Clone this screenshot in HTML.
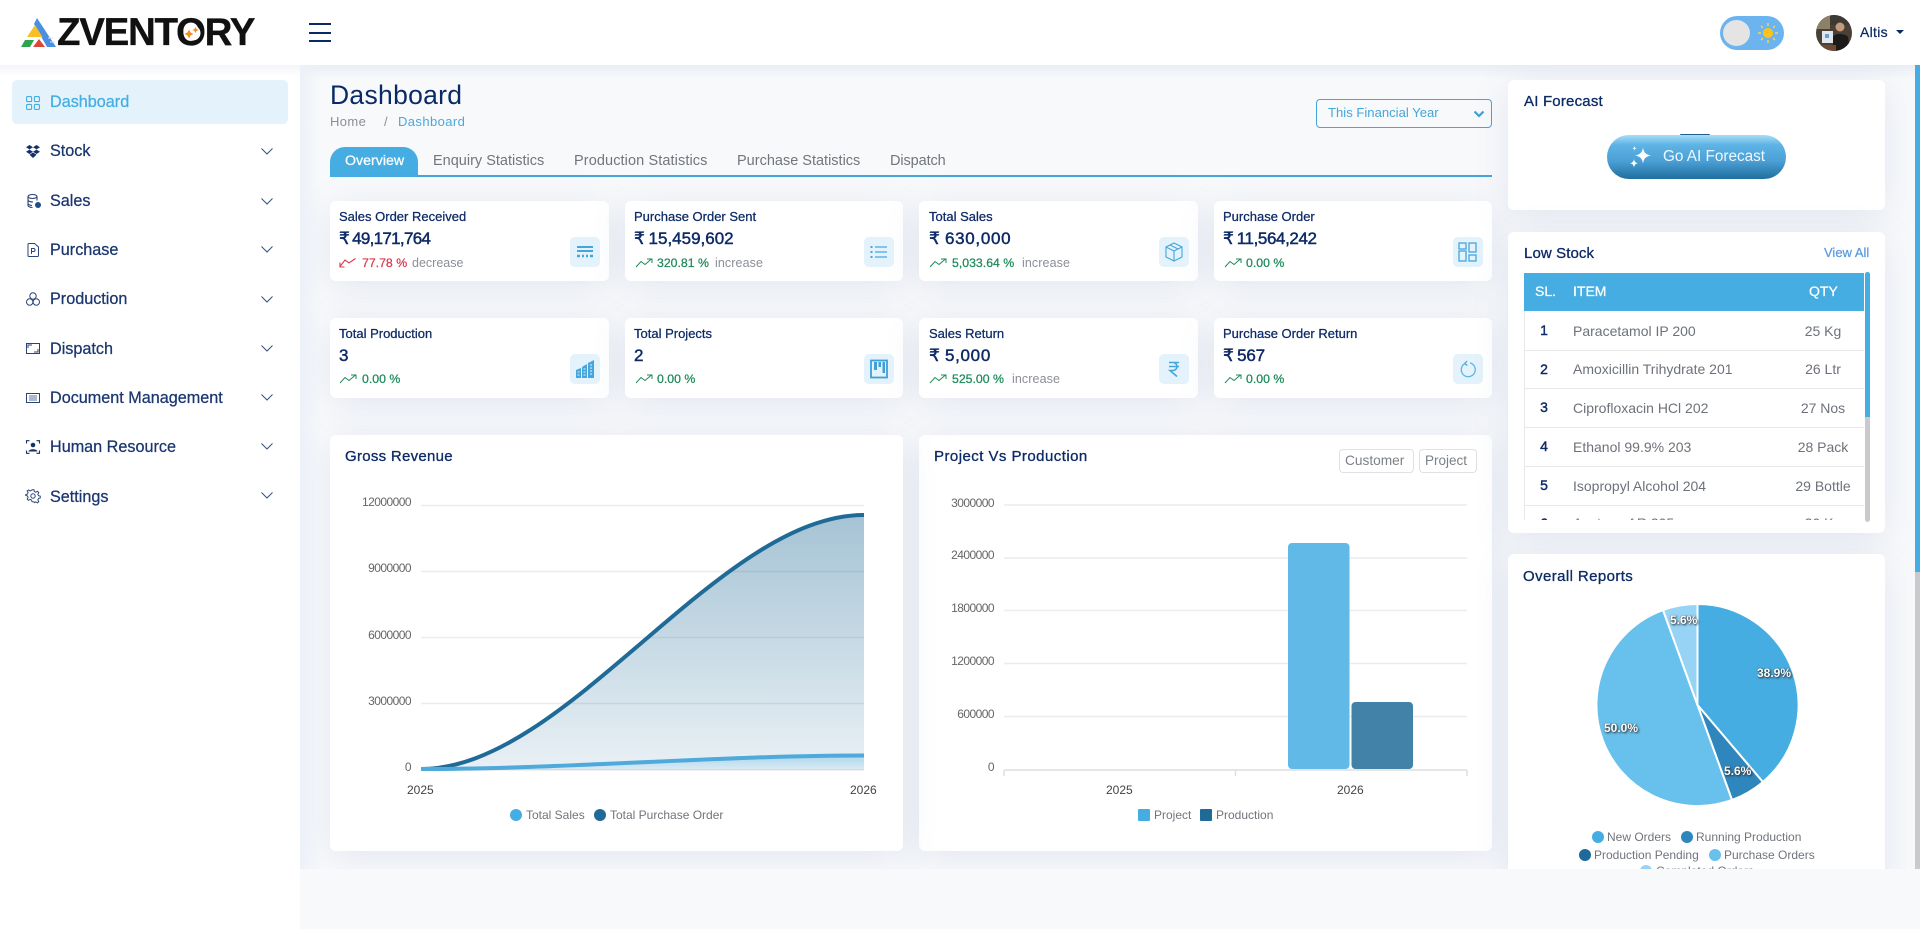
<!DOCTYPE html>
<html lang="en">
<head>
<meta charset="utf-8">
<title>Azventory Dashboard</title>
<style>
*{box-sizing:border-box}
html,body{margin:0;padding:0;width:1920px;height:929px;overflow:hidden;background:#f8f9fb;font-family:"Liberation Sans",Arial,sans-serif}
.t{position:absolute;white-space:nowrap;line-height:20px;height:20px}
.m{-webkit-text-stroke:.25px currentColor}
.b{position:absolute}
svg{position:absolute;display:block;overflow:visible}
header{position:absolute;left:0;top:0;width:1920px;height:65px;background:#fff;z-index:5}
aside{position:absolute;left:0;top:65px;width:300px;height:864px;background:#fff;z-index:4}
main{position:absolute;left:0;top:0;width:1920px;height:869px;overflow:hidden;background:#f8f9fb;z-index:1}
.topshade{position:absolute;left:300px;top:65px;width:1620px;height:14px;background:linear-gradient(#e9edf4,rgba(233,237,244,0))}
.leftshade{position:absolute;left:300px;top:65px;width:22px;height:804px;background:linear-gradient(90deg,#edf1f8,rgba(237,241,248,0))}
.card{position:absolute;background:#fff;border-radius:6px;box-shadow:0 6px 36px rgba(80,105,160,.13)}
.sc{width:279px;height:80px}
.ttl{font-size:13px;color:#0c2a66}
.val{font-size:17px;color:#0c2a66;font-weight:400;-webkit-text-stroke:.45px currentColor;word-spacing:-1px}
.pct{font-size:12.3px}
.g{color:#1e8a5a}.r{color:#d93a4a}
.gray{color:#8b8f96;font-size:12.5px}
.ib{position:absolute;width:30px;height:30px;border-radius:5px;background:#e3f2fb}
.h5{font-size:15px;color:#0c2a66;-webkit-text-stroke:.3px #0c2a66}
.nav{font-size:16.2px;color:#1a3670}
.tab{font-size:14.5px;color:#71767e;top:151px}
.row{position:absolute;left:1524px;width:340px;height:1px;background:#e6e8ec}
.sl{font-size:14px;color:#0c2a66;-webkit-text-stroke:.4px #0c2a66;width:40px;text-align:center;left:1524px}
.it{font-size:14px;color:#6d727a;left:1573px}
.q{font-size:14px;color:#6d727a;width:80px;text-align:center;left:1783px}
.ax{font-size:12px;color:#666;letter-spacing:-.55px}
.xl{font-size:12px;color:#444}
.lg{font-size:12px;color:#70757c}
.pl{font-size:12px;font-weight:700;color:#fff;text-shadow:1px 1px 2px #222,0 0 1px #333}
</style>
</head>
<body>

<main>
  <div class="topshade"></div>
  <div class="leftshade"></div>

  <div class="t" style="left:330px;top:83px;font-size:26.5px;line-height:24px;height:24px;color:#0a2a66;letter-spacing:.3px">Dashboard</div>
  <div class="t" style="left:330px;top:112px;font-size:13px;color:#8a8f96;letter-spacing:.4px">Home</div>
  <div class="t" style="left:384px;top:112px;font-size:13px;color:#8a8f96">/</div>
  <div class="t" style="left:398px;top:112px;font-size:13px;color:#4aa8dc;letter-spacing:.4px">Dashboard</div>

  <div class="b" style="left:1316px;top:99px;width:176px;height:29px;border:1px solid #45a6d8;border-radius:4px"></div>
  <div class="t" style="left:1328px;top:103px;font-size:13.1px;color:#45a6d8">This Financial Year</div>
  <svg style="left:1473px;top:110px" width="12" height="8" viewBox="0 0 12 8"><path d="M1.500 1.500 6 6l4.500-4.500" fill="none" stroke="#3f9fd6" stroke-width="2.2"/></svg>

  <div class="b" style="left:330px;top:175px;width:1162px;height:2px;background:#45a6d8"></div>
  <div class="b" style="left:330px;top:147px;width:88px;height:30px;background:#45ade2;border-radius:15px 15px 0 0"></div>
  <div class="t m" style="left:345px;top:151px;font-size:14.2px;color:#fff">Overview</div>
  <div class="t tab" style="left:433px">Enquiry Statistics</div>
  <div class="t tab" style="left:574px;letter-spacing:.1px">Production Statistics</div>
  <div class="t tab" style="left:737px">Purchase Statistics</div>
  <div class="t tab" style="left:890px;letter-spacing:-.1px">Dispatch</div>

  <div class="card sc" style="left:330px;top:201px"></div>
  <div class="card sc" style="left:625px;top:201px;width:278px"></div>
  <div class="card sc" style="left:919px;top:201px"></div>
  <div class="card sc" style="left:1214px;top:201px;width:278px"></div>
  <div class="card sc" style="left:330px;top:318px"></div>
  <div class="card sc" style="left:625px;top:318px;width:278px"></div>
  <div class="card sc" style="left:919px;top:318px"></div>
  <div class="card sc" style="left:1214px;top:318px;width:278px"></div>

  <div class="t ttl m" style="left:339px;top:207px">Sales Order Received</div>
  <div class="t val" style="left:339px;top:229px;letter-spacing:-.7px">₹ 49,171,764</div>
  <svg style="left:339px;top:257px" width="18" height="11" viewBox="0 0 18 11"><path d="M1 9.500 6 3l4 3 6.500-4.500M1 5.500v4.500h4.500" fill="none" stroke="#d93a4a" stroke-width="1.1"/></svg>
  <div class="t pct r m" style="left:362px;top:253px">77.78 %</div>
  <div class="t gray" style="left:412px;top:253px">decrease</div>
  <div class="ib" style="left:570px;top:237px"></div>
  <svg style="left:576px;top:245px" width="18" height="14" viewBox="0 0 18 14"><path d="M1 2h16M1 6h16" stroke="#45a6dc" stroke-width="2"/><path d="M1 11h3M6 11h2M10 11h2M14 11h3" stroke="#45a6dc" stroke-width="2.4"/></svg>

  <div class="t ttl m" style="left:634px;top:207px">Purchase Order Sent</div>
  <div class="t val" style="left:634px;top:229px">₹ 15,459,602</div>
  <svg style="left:635px;top:258px" width="18" height="10" viewBox="0 0 18 10"><path d="M1 9 6 3.500l4 3L16.500 1M12 1h5v4" fill="none" stroke="#1e8a5a" stroke-width="1"/></svg>
  <div class="t pct g m" style="left:657px;top:253px">320.81 %</div>
  <div class="t gray" style="left:715px;top:253px;letter-spacing:.1px">increase</div>
  <div class="ib" style="left:864px;top:237px"></div>
  <svg style="left:870px;top:245px" width="18" height="14" viewBox="0 0 18 14"><path d="M5 2h12M5 7h12M5 12h12" stroke="#5fb5e6" stroke-width="1.5"/><path d="M.5 2h2M.5 7h2M.5 12h2" stroke="#45a6dc" stroke-width="2"/></svg>

  <div class="t ttl m" style="left:929px;top:207px">Total Sales</div>
  <div class="t val" style="left:929px;top:229px;letter-spacing:.7px">₹ 630,000</div>
  <svg style="left:929px;top:258px" width="18" height="10" viewBox="0 0 18 10"><path d="M1 9 6 3.500l4 3L16.500 1M12 1h5v4" fill="none" stroke="#1e8a5a" stroke-width="1"/></svg>
  <div class="t pct g m" style="left:952px;top:253px">5,033.64 %</div>
  <div class="t gray" style="left:1022px;top:253px;letter-spacing:.1px">increase</div>
  <div class="ib" style="left:1159px;top:237px"></div>
  <svg style="left:1164px;top:242px" width="20" height="20" viewBox="0 0 20 20"><path d="M10 1 18 5v10l-8 4-8-4V5zM2 5l8 4 8-4M10 9v10M6 3l8 4" fill="none" stroke="#45a6dc" stroke-width="1.1"/></svg>

  <div class="t ttl m" style="left:1223px;top:207px">Purchase Order</div>
  <div class="t val" style="left:1223px;top:229px;letter-spacing:-.4px">₹ 11,564,242</div>
  <svg style="left:1224px;top:258px" width="18" height="10" viewBox="0 0 18 10"><path d="M1 9 6 3.500l4 3L16.500 1M12 1h5v4" fill="none" stroke="#1e8a5a" stroke-width="1"/></svg>
  <div class="t pct g m" style="left:1246px;top:253px">0.00 %</div>
  <div class="ib" style="left:1453px;top:237px"></div>
  <svg style="left:1458px;top:242px" width="20" height="20" viewBox="0 0 20 20"><g fill="none" stroke="#45a6dc" stroke-width="1.3"><rect x="1" y="1" width="7" height="6"/><rect x="11" y="1" width="7" height="9"/><rect x="1" y="9" width="7" height="10"/><rect x="11" y="13" width="7" height="6"/></g></svg>

  <div class="t ttl m" style="left:339px;top:324px">Total Production</div>
  <div class="t val" style="left:339px;top:346px">3</div>
  <svg style="left:339px;top:374px" width="18" height="10" viewBox="0 0 18 10"><path d="M1 9 6 3.500l4 3L16.500 1M12 1h5v4" fill="none" stroke="#1e8a5a" stroke-width="1"/></svg>
  <div class="t pct g m" style="left:362px;top:369px">0.00 %</div>
  <div class="ib" style="left:570px;top:354px"></div>
  <svg style="left:575px;top:359px" width="20" height="20" viewBox="0 0 20 20"><path d="M1 19v-8l5-2v10zM7 19V8l5-3v14zM13 19V4l6-3v18z" fill="#45a6dc"/><path d="M2.500 13h2M2.500 16h2M8.500 10h2M8.500 13h2M8.500 16h2M15 6h2M15 9h2M15 12h2M15 15h2" stroke="#e3f2fb" stroke-width="1"/></svg>

  <div class="t ttl m" style="left:634px;top:324px">Total Projects</div>
  <div class="t val" style="left:634px;top:346px">2</div>
  <svg style="left:635px;top:374px" width="18" height="10" viewBox="0 0 18 10"><path d="M1 9 6 3.500l4 3L16.500 1M12 1h5v4" fill="none" stroke="#1e8a5a" stroke-width="1"/></svg>
  <div class="t pct g m" style="left:657px;top:369px">0.00 %</div>
  <div class="ib" style="left:864px;top:354px"></div>
  <svg style="left:870px;top:359px" width="18" height="20" viewBox="0 0 18 20"><rect x="1" y="1.500" width="16" height="17" fill="none" stroke="#3f9fd6" stroke-width="1.8"/><rect x="4" y="3" width="3" height="8" fill="#3f9fd6"/><rect x="8.500" y="3" width="2.500" height="5" fill="#3f9fd6"/><rect x="12.500" y="3" width="2.500" height="11" fill="#3f9fd6"/></svg>

  <div class="t ttl m" style="left:929px;top:324px">Sales Return</div>
  <div class="t val" style="left:929px;top:346px;letter-spacing:.7px">₹ 5,000</div>
  <svg style="left:929px;top:374px" width="18" height="10" viewBox="0 0 18 10"><path d="M1 9 6 3.500l4 3L16.500 1M12 1h5v4" fill="none" stroke="#1e8a5a" stroke-width="1"/></svg>
  <div class="t pct g m" style="left:952px;top:369px">525.00 %</div>
  <div class="t gray" style="left:1012px;top:369px;letter-spacing:.1px">increase</div>
  <div class="ib" style="left:1159px;top:354px"></div>
  <svg style="left:1167px;top:361px" width="14" height="16" viewBox="0 0 14 16"><path d="M2 1.500h10M2 5.500h10M3 1.500h3a4 4 0 0 1 0 8H3l7 6" fill="none" stroke="#45a6dc" stroke-width="1.6"/></svg>

  <div class="t ttl m" style="left:1223px;top:324px">Purchase Order Return</div>
  <div class="t val" style="left:1223px;top:346px;letter-spacing:-.2px">₹ 567</div>
  <svg style="left:1224px;top:374px" width="18" height="10" viewBox="0 0 18 10"><path d="M1 9 6 3.500l4 3L16.500 1M12 1h5v4" fill="none" stroke="#1e8a5a" stroke-width="1"/></svg>
  <div class="t pct g m" style="left:1246px;top:369px">0.00 %</div>
  <div class="ib" style="left:1453px;top:354px"></div>
  <svg style="left:1460px;top:360px" width="16" height="17" viewBox="0 0 16 17"><path d="M5 3.500a7 7 0 1 0 5-.6" fill="none" stroke="#5fb5e6" stroke-width="1.3"/><path d="M7 1 4.800 3.500 7.300 5.500" fill="none" stroke="#45a6dc" stroke-width="1.2"/></svg>

  <div class="card" style="left:330px;top:435px;width:573px;height:416px"></div>
  <div class="t h5" style="left:345px;top:447px;letter-spacing:.28px">Gross Revenue</div>
  <svg style="left:0;top:0" width="1920" height="929" viewBox="0 0 1920 929">
    <defs>
      <linearGradient id="d" x1="0" y1="515" x2="0" y2="770" gradientUnits="userSpaceOnUse"><stop offset="0" stop-color="#1f6a96" stop-opacity=".4"/><stop offset="1" stop-color="#1f6a96" stop-opacity=".1"/></linearGradient>
      <linearGradient id="l" x1="0" y1="755" x2="0" y2="770" gradientUnits="userSpaceOnUse"><stop offset="0" stop-color="#45ade2" stop-opacity=".35"/><stop offset="1" stop-color="#45ade2" stop-opacity=".08"/></linearGradient>
    </defs>
    <path d="M421 505.500H864M421 571.500H864M421 637.500H864M421 703.500H864M421 770H864" stroke="#ececee" stroke-width="1.4" fill="none"/>
    <path d="M421 770C567 770 718 515 864 515V770Z" fill="url(#d)"/>
    <path d="M421 770C567 770 718 755.500 864 755.500V770Z" fill="url(#l)"/>
    <path d="M421 769C567 769 718 515 864 515" fill="none" stroke="#1f6a96" stroke-width="4"/>
    <path d="M421 769C567 769 718 755.500 864 755.500" fill="none" stroke="#4fa9da" stroke-width="4"/>

    <circle cx="516" cy="815" r="6" fill="#45ade2"/>
    <circle cx="600" cy="815" r="6" fill="#1f6a96"/>

    <path d="M1004 505H1467M1004 558H1467M1004 610.500H1467M1004 663.500H1467M1004 716.500H1467" stroke="#ececee" stroke-width="1.4" fill="none"/>
    <path d="M1004 770H1467M1004 770v6M1235.500 770v6M1467 770v6" stroke="#dcdde0" stroke-width="1.4" fill="none"/>
    <path d="M1288 769V547a4 4 0 0 1 4-4h53.500a4 4 0 0 1 4 4V765a4 4 0 0 1-4 4H1292a4 4 0 0 1-4-4z" fill="#60b9e7"/>
    <path d="M1351.500 769V706a4 4 0 0 1 4-4H1409a4 4 0 0 1 4 4V765a4 4 0 0 1-4 4h-53.500a4 4 0 0 1-4-4z" fill="#4282a8"/>
    <rect x="1138" y="809" width="12" height="12" rx="1" fill="#45ade2"/>
    <rect x="1200" y="809" width="12" height="12" rx="1" fill="#1f6a96"/>
  </svg>

  <div class="t ax" style="right:1509px;top:492px">12000000</div>
  <div class="t ax" style="right:1509px;top:558px">9000000</div>
  <div class="t ax" style="right:1509px;top:625px">6000000</div>
  <div class="t ax" style="right:1509px;top:691px">3000000</div>
  <div class="t ax" style="right:1509px;top:757px">0</div>
  <div class="t xl" style="left:407px;top:780px">2025</div>
  <div class="t xl" style="left:850px;top:780px">2026</div>
  <div class="t lg" style="left:526px;top:805px">Total Sales</div>
  <div class="t lg" style="left:610px;top:805px">Total Purchase Order</div>

  <div class="card" style="left:919px;top:435px;width:573px;height:416px;z-index:-1"></div>
  <div class="t h5" style="left:934px;top:447px;letter-spacing:.45px">Project Vs Production</div>
  <div class="b" style="left:1339px;top:449px;width:75px;height:24px;border:1px solid #dfe1e4;border-radius:4px"></div>
  <div class="b" style="left:1419px;top:449px;width:58px;height:24px;border:1px solid #dfe1e4;border-radius:4px"></div>
  <div class="t" style="left:1345px;top:451px;font-size:13.7px;color:#7b8087">Customer</div>
  <div class="t" style="left:1425px;top:451px;font-size:13.5px;color:#7b8087">Project</div>
  <div class="t ax" style="right:926px;top:493px">3000000</div>
  <div class="t ax" style="right:926px;top:545px">2400000</div>
  <div class="t ax" style="right:926px;top:598px">1800000</div>
  <div class="t ax" style="right:926px;top:651px">1200000</div>
  <div class="t ax" style="right:926px;top:704px">600000</div>
  <div class="t ax" style="right:926px;top:757px">0</div>
  <div class="t xl" style="left:1106px;top:780px">2025</div>
  <div class="t xl" style="left:1337px;top:780px">2026</div>
  <div class="t lg" style="left:1154px;top:805px">Project</div>
  <div class="t lg" style="left:1216px;top:805px">Production</div>

  <div class="card" style="left:1508px;top:80px;width:377px;height:130px"></div>
  <div class="t h5" style="left:1524px;top:92px;letter-spacing:.2px">AI Forecast</div>
  <div class="b" style="left:1680px;top:134px;width:30px;height:2px;background:#1f5f8a;border-radius:2px"></div>
  <div class="b" style="left:1607px;top:135px;width:179px;height:44px;border-radius:22px;background:linear-gradient(#a8def9 0,#5fb4e6 22%,#4a9fd4 60%,#1f6e9e 100%)"></div>
  <svg style="left:1628px;top:145px" width="26" height="26" viewBox="0 0 26 26" fill="#fff"><path d="M15 2.500c.8 5 2.700 7 8 8-5.300 1-7.200 3-8 8-.8-5-2.700-7-8-8 5.300-1 7.200-3 8-8zM6 14c.5 2.700 1.400 3.700 4 4.300-2.600.6-3.500 1.600-4 4.300-.5-2.700-1.400-3.700-4-4.300 2.600-.6 3.500-1.600 4-4.300zM6.500 1c.3 1.500.8 2 2 2.300-1.200.3-1.700.8-2 2.300-.3-1.500-.8-2-2-2.300 1.200-.3 1.700-.8 2-2.300z"/></svg>
  <div class="t" style="left:1663px;top:147px;font-size:15.3px;color:#eef8fe">Go AI Forecast</div>

  <div class="card" style="left:1508px;top:232px;width:377px;height:301px"></div>
  <div class="t h5" style="left:1524px;top:244px;letter-spacing:.1px">Low Stock</div>
  <div class="t m" style="left:1824px;top:243px;font-size:13px;color:#5b9be0">View All</div>
  <div class="b" style="left:1524px;top:273px;width:340px;height:247px;overflow:hidden">
    <div style="position:absolute;left:-1524px;top:-273px;width:1920px;height:929px">
      <div class="b" style="left:1524px;top:311px;width:1px;height:209px;background:#e6e8ec"></div>
      <div class="b" style="left:1524px;top:273px;width:340px;height:38px;background:#45ade2"></div>
      <div class="t m" style="left:1535px;top:281px;font-size:14px;color:#fff">SL.</div>
      <div class="t m" style="left:1573px;top:281px;font-size:14px;color:#fff">ITEM</div>
      <div class="t m" style="left:1809px;top:281px;font-size:14px;color:#fff">QTY</div>
      <div class="row" style="top:350px"></div><div class="row" style="top:388px"></div><div class="row" style="top:427px"></div><div class="row" style="top:466px"></div><div class="row" style="top:505px"></div>
      <div class="t sl" style="top:320px">1</div><div class="t it" style="top:321px">Paracetamol IP 200</div><div class="t q" style="top:321px">25 Kg</div>
      <div class="t sl" style="top:359px">2</div><div class="t it" style="top:359px">Amoxicillin Trihydrate 201</div><div class="t q" style="top:359px">26 Ltr</div>
      <div class="t sl" style="top:397px">3</div><div class="t it" style="top:398px">Ciprofloxacin HCl 202</div><div class="t q" style="top:398px">27 Nos</div>
      <div class="t sl" style="top:436px">4</div><div class="t it" style="top:437px">Ethanol 99.9% 203</div><div class="t q" style="top:437px">28 Pack</div>
      <div class="t sl" style="top:475px">5</div><div class="t it" style="top:476px">Isopropyl Alcohol 204</div><div class="t q" style="top:476px">29 Bottle</div>
      <div class="t sl" style="top:513px">6</div><div class="t it" style="top:513px">Acetone AR 205</div><div class="t q" style="top:513px">30 Kg</div>
    </div>
  </div>
  <div class="b" style="left:1865px;top:272px;width:5px;height:250px;background:#c9cacc;border-radius:3px"></div>
  <div class="b" style="left:1865px;top:272px;width:5px;height:145px;background:#45ade2;border-radius:3px 3px 0 0"></div>

  <div class="card" style="left:1508px;top:554px;width:377px;height:340px"></div>
  <div class="t h5" style="left:1523px;top:567px;letter-spacing:.4px">Overall Reports</div>
  <svg style="left:0;top:0" width="1920" height="929" viewBox="0 0 1920 929">
    <g stroke="#fff" stroke-width="2" stroke-linejoin="round" transform="translate(-.5 0)">
      <path d="M1698 705V604A101 101 0 0 1 1763.400 782Z" fill="#45ade2"/>
      <path d="M1698 705 1763.400 782A101 101 0 0 1 1732.500 800Z" fill="#2e86bd"/>
      <path d="M1698 705 1732.500 800A101 101 0 1 1 1663.500 610Z" fill="#68c1ec"/>
      <path d="M1698 705 1663.500 610A101 101 0 0 1 1698 604Z" fill="#96d3f4"/>
    </g>
    <circle cx="1598" cy="837" r="6" fill="#45ade2"/>
    <circle cx="1687" cy="837" r="6" fill="#2e86bd"/>
    <circle cx="1585" cy="855" r="6" fill="#1e6a9a"/>
    <circle cx="1715" cy="855" r="6" fill="#68c1ec"/>
    <circle cx="1646" cy="871" r="6" fill="#96d3f4"/>
  </svg>
  <div class="t pl" style="left:1757px;top:663px">38.9%</div>
  <div class="t pl" style="left:1724px;top:761px">5.6%</div>
  <div class="t pl" style="left:1604px;top:718px">50.0%</div>
  <div class="t pl" style="left:1670px;top:610px">5.6%</div>
  <div class="t lg" style="left:1607px;top:827px">New Orders</div>
  <div class="t lg" style="left:1696px;top:827px">Running Production</div>
  <div class="t lg" style="left:1594px;top:845px">Production Pending</div>
  <div class="t lg" style="left:1724px;top:845px">Purchase Orders</div>
  <div class="t lg" style="left:1656px;top:861px">Completed Orders</div>

  <div class="b" style="left:1915px;top:65px;width:5px;height:804px;background:#c9cacc"></div>
  <div class="b" style="left:1915px;top:65px;width:5px;height:507px;background:#45ade2"></div>
</main>

<header>
  <svg style="left:0;top:0" width="70" height="60" viewBox="0 0 70 60">
    <path d="M37 18 56 47H47L34 24z" fill="#4a90e2"/>
    <path d="M48 38h5M50 42h5" stroke="#cfe3f8" stroke-width="1"/>
    <path d="M35 25 42.500 37H27z" fill="#f6c026"/>
    <path d="M25 40H34L30 47H21z" fill="#2fa24f"/>
    <path d="M39 39 45 47H33z" fill="#d9483b"/>
  </svg>
  <div class="t" style="left:57px;top:12px;height:40px;line-height:41px;font-size:38.5px;font-weight:700;color:#111;letter-spacing:-1.300px;-webkit-text-stroke:.3px #111">ZVENTORY</div>
  <svg style="left:180px;top:21px" width="26" height="24" viewBox="0 0 26 24"><circle cx="13" cy="12" r="7.500" fill="#fff"/><path d="M9 8.500l1.500 3 3 1.500-3 1.500L9 17.500l-1.500-3-3-1.500 3-1.500zM15.500 6l1 2 2 1-2 1-1 2-1-2-2-1 2-1z" fill="#f58a1f"/></svg>
  <div class="b" style="left:309px;top:23px;width:22px;height:2px;background:#0a2a66"></div>
  <div class="b" style="left:309px;top:32px;width:22px;height:2px;background:#0a2a66"></div>
  <div class="b" style="left:309px;top:40px;width:22px;height:2px;background:#0a2a66"></div>

  <div class="b" style="left:1720px;top:16px;width:64px;height:34px;border-radius:17px;background:#6cb4f0"></div>
  <div class="b" style="left:1723px;top:20px;width:27px;height:26px;border-radius:50%;background:#e4e4e4"></div>
  <svg style="left:1757px;top:22px" width="22" height="22" viewBox="0 0 22 22"><circle cx="11" cy="11" r="5" fill="#fcc419"/><path d="M11 1v3M11 18v3M1 11h3M18 11h3M4 4l2 2M16 16l2 2M4 18l2-2M16 6l2-2" stroke="#fcd34d" stroke-width="1.400"/></svg>

  <svg style="left:1816px;top:15px" width="36" height="36" viewBox="0 0 36 36">
    <clipPath id="av"><circle cx="18" cy="18" r="18"/></clipPath>
    <g clip-path="url(#av)">
      <rect width="36" height="36" fill="#4a4036"/>
      <rect y="0" width="14" height="14" fill="#8d8069"/>
      <rect x="14" y="0" width="22" height="10" fill="#3d3a34"/>
      <rect x="6" y="16" width="11" height="12" fill="#dfe7ef"/>
      <rect x="9" y="19" width="4" height="4" fill="#6c9fd4"/>
      <circle cx="24" cy="12" r="4.500" fill="#c79a7c"/>
      <path d="M17 36V22c1-4 12-4 15 0l2 14z" fill="#1c1b1a"/>
      <rect y="30" width="20" height="6" fill="#6d4a32"/>
    </g>
  </svg>
  <div class="t m" style="left:1860px;top:22px;font-size:14px;color:#0a2a66;letter-spacing:.3px">Altis</div>
  <svg style="left:1896px;top:30px" width="8" height="4" viewBox="0 0 8 4"><path d="M0 0h8L4 4z" fill="#0a2a66"/></svg>
</header>

<aside>
  <div class="b" style="left:0;top:0;width:300px;height:12px;background:linear-gradient(#f3f5f9,rgba(243,245,249,0))"></div>
  <div class="b" style="left:12px;top:15px;width:276px;height:44px;background:#e3f2fb;border-radius:5px"></div>
</aside>

<div style="position:absolute;left:0;top:0;z-index:6">
  <svg style="left:26px;top:96px" width="14" height="14" viewBox="0 0 14 14"><g fill="none" stroke="#45ade2" stroke-width="1.100"><rect x=".6" y=".6" width="5" height="5" rx="1"/><rect x="8.400" y=".6" width="5" height="5" rx="1"/><rect x=".6" y="8.400" width="5" height="5" rx="1"/><rect x="8.400" y="8.400" width="5" height="5" rx="1"/></g></svg>
  <div class="t m" style="left:50px;top:92px;font-size:16.2px;color:#45ade2">Dashboard</div>

  <svg style="left:26px;top:145px" width="14" height="13" viewBox="0 0 14 13" fill="#15306a"><path d="M3.500 0 7 2.200 3.500 4.400 0 2.200zM10.500 0 14 2.200 10.500 4.400 7 2.200zM3.500 4.600 7 6.800 3.500 9 0 6.800zM10.500 4.600 14 6.800 10.500 9 7 6.800zM7 7.500l3.500 2.200L7 13 3.500 9.700z"/></svg>
  <div class="t nav m" style="left:50px;top:141px">Stock</div>
  <svg style="left:261px;top:148px" width="12" height="7" viewBox="0 0 12 7"><path d="M.5.5 6 6l5.500-5.500" fill="none" stroke="#33507f" stroke-width="1"/></svg>

  <svg style="left:27px;top:194px" width="14" height="14" viewBox="0 0 14 14"><g fill="none" stroke="#2a4478" stroke-width="1.100"><ellipse cx="5.500" cy="2.500" rx="4.500" ry="2"/><path d="M1 2.500v9c0 1 2 2 4.500 2M10 2.500v4M1 6c0 1.200 2.500 2 5 2M1 9.500c0 1 2 2 4 2"/></g><circle cx="11" cy="11" r="3" fill="#1f4d8c"/></svg>
  <div class="t nav m" style="left:50px;top:191px">Sales</div>
  <svg style="left:261px;top:198px" width="12" height="7" viewBox="0 0 12 7"><path d="M.5.5 6 6l5.500-5.500" fill="none" stroke="#33507f" stroke-width="1"/></svg>

  <svg style="left:27px;top:243px" width="12" height="14" viewBox="0 0 12 14"><path d="M1 1.500c0-.5.400-1 1-1h5.500L11.500 4v8.500c0 .6-.4 1-1 1H2c-.6 0-1-.4-1-1z" fill="none" stroke="#2a4478" stroke-width="1"/><path d="M4.500 11V5.500h2a1.500 1.500 0 0 1 0 3h-2" fill="none" stroke="#2a4478" stroke-width="1"/></svg>
  <div class="t nav m" style="left:50px;top:240px">Purchase</div>
  <svg style="left:261px;top:246px" width="12" height="7" viewBox="0 0 12 7"><path d="M.5.5 6 6l5.500-5.500" fill="none" stroke="#33507f" stroke-width="1"/></svg>

  <svg style="left:26px;top:292px" width="14" height="14" viewBox="0 0 14 14"><g fill="none" stroke="#2a4478" stroke-width="1"><circle cx="7" cy="4" r="3.200"/><circle cx="3.700" cy="10" r="3.200"/><circle cx="10.300" cy="10" r="3.200"/></g></svg>
  <div class="t nav m" style="left:50px;top:289px">Production</div>
  <svg style="left:261px;top:296px" width="12" height="7" viewBox="0 0 12 7"><path d="M.5.5 6 6l5.500-5.500" fill="none" stroke="#33507f" stroke-width="1"/></svg>

  <svg style="left:26px;top:343px" width="14" height="11" viewBox="0 0 14 11"><rect x=".5" y=".5" width="13" height="10" fill="none" stroke="#2a4478" stroke-width="1"/><path d="M2 5V2h4M12 6v3H8" fill="none" stroke="#2a4478" stroke-width="1"/></svg>
  <div class="t nav m" style="left:50px;top:339px">Dispatch</div>
  <svg style="left:261px;top:345px" width="12" height="7" viewBox="0 0 12 7"><path d="M.5.5 6 6l5.500-5.500" fill="none" stroke="#33507f" stroke-width="1"/></svg>

  <svg style="left:26px;top:393px" width="14" height="10" viewBox="0 0 14 10"><rect x=".5" y=".5" width="13" height="9" fill="none" stroke="#2a4478" stroke-width="1"/><path d="M3 3h8M3 5h8M3 7h8" stroke="#2a4478" stroke-width=".8"/></svg>
  <div class="t nav m" style="left:50px;top:388px">Document Management</div>
  <svg style="left:261px;top:394px" width="12" height="7" viewBox="0 0 12 7"><path d="M.5.5 6 6l5.500-5.500" fill="none" stroke="#33507f" stroke-width="1"/></svg>

  <svg style="left:26px;top:440px" width="14" height="14" viewBox="0 0 14 14"><path d="M.5 3.500V.7h3M10.500.7h3v2.800M.5 10.500v2.800h3M10.500 13.300h3v-2.800" fill="none" stroke="#15306a" stroke-width="1.100"/><circle cx="7" cy="5" r="2.300" fill="#15306a"/><path d="M2.500 11.500c.5-3 8.500-3 9 0z" fill="#15306a"/></svg>
  <div class="t nav m" style="left:50px;top:437px">Human Resource</div>
  <svg style="left:261px;top:443px" width="12" height="7" viewBox="0 0 12 7"><path d="M.5.5 6 6l5.500-5.500" fill="none" stroke="#33507f" stroke-width="1"/></svg>

  <svg style="left:26px;top:489px" width="14" height="14" viewBox="0 0 14 14"><g fill="none" stroke="#2a4478" stroke-width="1"><circle cx="7" cy="7" r="2.200"/><path d="M6 .8h2l.4 1.800 1.600.7 1.600-1 1.400 1.400-1 1.600.7 1.600 1.800.4v2l-1.800.4-.7 1.600 1 1.600-1.400 1.400-1.600-1-1.600.7L8 13.200H6l-.4-1.800-1.600-.7-1.600 1L1 10.300l1-1.600-.7-1.600L-.500 6.700v-1l1.800-.4.7-1.600-1-1.600L2.400 1l1.600 1 1.600-.7z" transform="translate(.2 0) scale(.97)"/></g></svg>
  <div class="t nav m" style="left:50px;top:487px">Settings</div>
  <svg style="left:261px;top:492px" width="12" height="7" viewBox="0 0 12 7"><path d="M.5.5 6 6l5.500-5.500" fill="none" stroke="#33507f" stroke-width="1"/></svg>
</div>

</body>
</html>
